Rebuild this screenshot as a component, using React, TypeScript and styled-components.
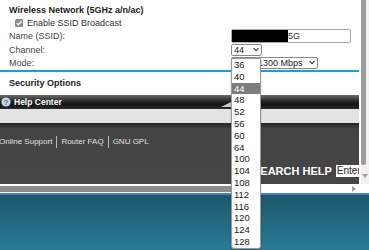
import React from 'react';
import styled, { createGlobalStyle } from 'styled-components';

const GlobalStyle = createGlobalStyle`
  html, body {
    margin: 0;
    padding: 0;
    overflow: hidden;
    background: #2a7894;
  }
  * { box-sizing: border-box; }
`;

const channels = ['36', '40', '44', '48', '52', '56', '60', '64', '100', '104', '108', '112', '116', '120', '124', '128'];

const App = () => {
  return (
    <Page>
      <GlobalStyle />
      <Frame>
        <Content>
          <Form>
            <Title>Wireless Network (5GHz a/n/ac)</Title>
            <CheckRow>
              <Check>
                <svg width="8" height="8" viewBox="0 0 8 8">
                  <path d="M1.6 4.1 L3.3 5.7 L6.5 2.2" stroke="#fff" strokeWidth="1.3" fill="none" />
                </svg>
              </Check>
              Enable SSID Broadcast
            </CheckRow>
            <FieldRow $h={14}>
              <Label>Name (SSID):</Label>
              <TextBox>
                <Redact />
                5G
              </TextBox>
            </FieldRow>
            <FieldRow $h={13}>
              <Label>Channel:</Label>
              <Select $w={31}>
                44
                <Chevron />
              </Select>
            </FieldRow>
            <FieldRow $h={13}>
              <Label>Mode:</Label>
              <Select $w={87}>
                Up to 1300 Mbps
                <Chevron />
              </Select>
            </FieldRow>
            <Divider />
            <SectionTitle>Security Options</SectionTitle>
          </Form>
          <HelpHeader>
            <HelpIcon>
              <svg width="10" height="10" viewBox="0 0 10 10">
                <circle cx="5" cy="5" r="4.6" fill="#c9d5e2" />
                <text x="5" y="8" textAnchor="middle" fontSize="8" fontWeight="bold" fill="#5a6675" fontFamily="Liberation Sans, Arial, sans-serif">?</text>
              </svg>
            </HelpIcon>
            Help Center
          </HelpHeader>
          <HelpBar />
          <HelpBody>
            <Links>
              <LinkText>Online Support</LinkText>
              <Sep />
              <LinkText>Router FAQ</LinkText>
              <Sep />
              <LinkText>GNU GPL</LinkText>
            </Links>
            <SearchRow>
              SEARCH HELP
              <SearchBox>Enter keyword</SearchBox>
            </SearchRow>
          </HelpBody>
        </Content>
        <VScroll>
          <VThumb />
          <ArrowDown />
        </VScroll>
        <HScroll>
          <HThumb />
          <ArrowRight />
        </HScroll>
        <Corner />
      </Frame>
      <BlueLine />
      <Backdrop />
      <ChannelList>
        {channels.map((c) => (
          <Option key={c} $active={c === '44'}>{c}</Option>
        ))}
      </ChannelList>
    </Page>
  );
};

const Page = styled.div`
  position: relative;
  width: 369px;
  height: 250px;
  overflow: hidden;
  font-family: "Liberation Sans", Arial, sans-serif;
  display: flex;
  flex-direction: column;
`;

const Frame = styled.div`
  display: grid;
  grid-template-columns: 359px 10px;
  grid-template-rows: 184px 9px;
  background: #fff;
`;

const Content = styled.div`
  display: flex;
  flex-direction: column;
  overflow: hidden;
  background: #fff;
`;

const Form = styled.div`
  display: flex;
  flex-direction: column;
  height: 95px;
`;

const Title = styled.div`
  height: 17px;
  padding: 4px 0 0 9px;
  font-size: 9px;
  line-height: 13px;
  font-weight: bold;
  color: #222;
`;

const CheckRow = styled.div`
  height: 12px;
  display: flex;
  align-items: center;
  padding-left: 15px;
  gap: 4px;
  font-size: 9px;
  color: #333;
`;

const Check = styled.span`
  width: 8px;
  height: 8px;
  border-radius: 1.5px;
  background: #8a8a8a;
  display: flex;
`;

const FieldRow = styled.div<{ $h: number }>`
  height: ${(p) => p.$h}px;
  display: flex;
  align-items: center;
  padding-left: 9px;
  font-size: 9px;
  color: #444;
`;

const Label = styled.span`
  width: 222px;
`;

const TextBox = styled.div`
  width: 120px;
  height: 14px;
  border: 1px solid #a9a9a9;
  border-radius: 2px;
  display: flex;
  align-items: center;
  font-size: 9px;
  color: #333;
`;

const Redact = styled.span`
  width: 56px;
  height: 12px;
  background: #000;
`;

const Select = styled.div<{ $w: number }>`
  width: ${(p) => p.$w}px;
  height: 12px;
  border: 1px solid #8a8a8a;
  border-radius: 2px;
  display: flex;
  align-items: center;
  justify-content: space-between;
  padding: 0 3px 0 2px;
  font-size: 9px;
  color: #222;
`;

const Chevron = styled.span`
  width: 4px;
  height: 4px;
  border-right: 1.2px solid #333;
  border-bottom: 1.2px solid #333;
  transform: translateY(-1.5px) rotate(45deg);
`;

const Divider = styled.div`
  height: 2px;
  margin-top: 1px;
  background: #1c9de0;
`;

const SectionTitle = styled.div`
  flex: 1;
  display: flex;
  align-items: center;
  padding: 0 0 1px 9px;
  font-size: 9px;
  font-weight: bold;
  color: #222;
`;

const HelpHeader = styled.div`
  position: relative;
  height: 14px;
  display: flex;
  align-items: center;
  gap: 3px;
  padding-left: 1px;
  background: linear-gradient(#6c6c6c, #262626 45%, #141414 70%, #2c2c2c);
  color: #fff;
  font-size: 8.5px;
  font-weight: bold;

  &::after {
    content: '';
    position: absolute;
    left: 221px;
    bottom: 2px;
    border-left: 10px solid transparent;
    border-bottom: 5px solid #c8c8c8;
  }
`;

const HelpIcon = styled.span`
  display: flex;
`;

const HelpBar = styled.div`
  height: 14px;
  background: #e3e3e3;
`;

const HelpBody = styled.div`
  flex: 1;
  display: flex;
  flex-direction: column;
  background: linear-gradient(#262626, #444 6px, #454545);
`;

const Links = styled.div`
  margin: 12px 0 0 -1px;
  height: 13px;
  display: flex;
  align-items: center;
  gap: 3px;
  font-size: 8px;
  color: #e0e0e0;
`;

const LinkText = styled.span`
  white-space: nowrap;
`;

const Sep = styled.span`
  width: 1px;
  height: 12px;
  background: #b8b8b8;
  margin: 0 1px;
`;

const SearchRow = styled.div`
  margin: 17px 0 0 253px;
  height: 12px;
  display: flex;
  align-items: center;
  gap: 4px;
  font-size: 11px;
  font-weight: bold;
  color: #fff;
  white-space: nowrap;
`;

const SearchBox = styled.span`
  flex: none;
  width: 60px;
  height: 12px;
  background: #fff;
  color: #222;
  font-size: 10px;
  font-weight: normal;
  padding-left: 1px;
  line-height: 12px;
  overflow: hidden;
`;

const VScroll = styled.div`
  position: relative;
  background: #f1f1f1;
  border-left: 2px solid #fff;
`;

const VThumb = styled.div`
  width: 5px;
  height: 165px;
  background: #9b9b9b;
  border-radius: 0 0 2px 2px;
`;

const ArrowDown = styled.div`
  margin: 9px 0 0 1px;
  width: 0;
  height: 0;
  border-left: 3px solid transparent;
  border-right: 3px solid transparent;
  border-top: 4px solid #a0a0a0;
`;

const HScroll = styled.div`
  display: flex;
  align-items: center;
  justify-content: space-between;
  background: #fff;
  padding: 2px 3px 1px 0;
`;

const HThumb = styled.div`
  width: 245px;
  height: 6px;
  background: #8c8c8c;
`;

const ArrowRight = styled.div`
  width: 0;
  height: 0;
  border-top: 3px solid transparent;
  border-bottom: 3px solid transparent;
  border-left: 4px solid #a0a0a0;
`;

const Corner = styled.div`
  background: #fff;
`;

const BlueLine = styled.div`
  height: 2px;
  background: #3d86cf;
`;

const Backdrop = styled.div`
  flex: 1;
  background: linear-gradient(#1d576c, #2a7a96);
`;

const ChannelList = styled.div`
  position: absolute;
  left: 231px;
  top: 58px;
  width: 30px;
  background: #fff;
  border: 1px solid #9a9a9a;
  border-radius: 0 0 3px 3px;
  box-shadow: 0 1px 2px rgba(0, 0, 0, 0.25);
  overflow: hidden;
`;

const Option = styled.div<{ $active: boolean }>`
  height: 11.8px;
  line-height: 11.8px;
  padding-left: 2px;
  font-size: 9.5px;
  color: ${(p) => (p.$active ? '#fff' : '#222')};
  background: ${(p) => (p.$active ? '#7d7d7d' : 'transparent')};
`;

export default App;
